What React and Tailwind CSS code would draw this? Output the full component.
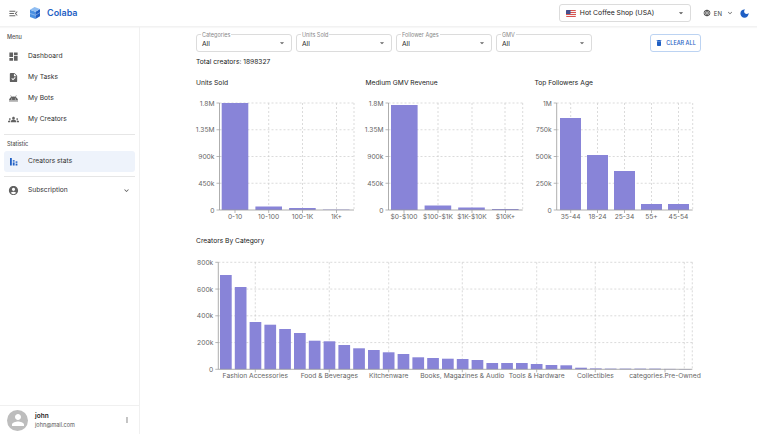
import React from "react";
import { MdMenuOpen, MdDashboard, MdTask, MdGroups, MdAccountCircle, MdExpandMore, MdLanguage, MdDarkMode, MdDelete, MdMoreVert, MdArrowDropDown, MdPerson } from "react-icons/md";

const F = '"Inter","Liberation Sans",sans-serif';
const fmt = { fontFamily: F };

function Chart({ box, left, right, top, bottom, yLabels, vgrid, bars, xLabels, barW }) {
  const [x0, y0, w, h] = box;
  const n = yLabels.length;
  const ys = yLabels.map((_, i) => top + ((bottom - top) * i) / (n - 1));
  return (
    <svg width={w} height={h} viewBox={`${x0} ${y0} ${w} ${h}`} className="block overflow-visible">
      {ys.slice(0, -1).map((y) => (
        <line key={y} x1={left} x2={right} y1={y} y2={y} stroke="#ccc" strokeWidth="0.7" strokeDasharray="2 2" />
      ))}
      {vgrid.concat(right).map((x) => (
        <line key={x} x1={x} x2={x} y1={top} y2={bottom} stroke="#ccc" strokeWidth="0.7" strokeDasharray="2 2" />
      ))}
      {bars.map(([x, t], i) => (
        <rect key={i} x={x} y={t} width={barW} height={bottom - t} fill="#8884d8" />
      ))}
      <line x1={left} x2={left} y1={top} y2={bottom} stroke="#999" strokeWidth="0.8" />
      <line x1={left} x2={right} y1={bottom} y2={bottom} stroke="#999" strokeWidth="0.8" />
      {ys.map((y, i) => (
        <g key={i}>
          <line x1={left - 3} x2={left} y1={y} y2={y} stroke="#999" strokeWidth="0.7" />
          <text x={left - 5} y={y + 2.5} textAnchor="end" fontSize="6.7" fill="#666" style={fmt}>{yLabels[i]}</text>
        </g>
      ))}
      {xLabels.map(([x, s]) => (
        <g key={s}>
          <line x1={x} x2={x} y1={bottom} y2={bottom + 3} stroke="#999" strokeWidth="0.7" />
          <text x={x} y={bottom + 9} textAnchor="middle" fontSize="6.7" fill="#666" style={fmt}>{s}</text>
        </g>
      ))}
    </svg>
  );
}

const catTops = [275,287,322,324.7,329,333,340.7,341.3,345,348.3,350,352.3,354,357.3,358,358.7,359,360,363,363,363,364,365,365.3,367.7,368.4,368.6,368.6,368.6,368.6,368.9,369];

function NavItem({ icon, label, active }) {
  return (
    <div className={`flex h-[21px] items-center rounded-[3px] ${active ? "bg-[#eef3fb]" : ""}`}>
      <span className={`flex w-[18px] justify-center text-[11px] ${active ? "text-[#1f5fc4]" : "text-[#616161]"}`}>{icon}</span>
      <span className="ml-[6px] text-[6.7px] text-[#333]">{label}</span>
    </div>
  );
}

function Filter({ label }) {
  return (
    <div className="relative flex h-[18px] w-[96px] items-center justify-between rounded-[3px] border border-[#dcdcdc] pl-[5px] pr-[4px]">
      <span className="absolute left-[4px] top-[-3px] bg-white px-[1px] text-[5.5px] leading-[6px] text-[#888]">{label}</span>
      <span className="pt-[2px] text-[6.7px] text-[#222]">All</span>
      <MdArrowDropDown className="text-[10px] text-[#666]" />
    </div>
  );
}

function Logo() {
  return (
    <svg width="10" height="12" viewBox="0 0 11 13">
      <path d="M0 3 L6 5 L6 13 L0 11Z" fill="#4a90e2" />
      <path d="M6 5 L11 2 L11 10 L6 13Z" fill="#1f5fc4" />
      <path d="M0 3 L5 0 L11 2 L6 5Z" fill="#8fbdf2" />
      <path d="M0 7 L6 9 L11 6" stroke="#cfe2fa" strokeWidth="0.5" fill="none" />
    </svg>
  );
}

function Flag() {
  return (
    <svg width="10" height="7" viewBox="0 0 10 7" className="rounded-[1px]">
      <rect width="10" height="7" fill="#d9534f" />
      <rect y="1" width="10" height="1" fill="#f3f3f3" />
      <rect y="3" width="10" height="1" fill="#f3f3f3" />
      <rect y="5" width="10" height="1" fill="#f3f3f3" />
      <rect width="4.5" height="4" fill="#44508f" />
    </svg>
  );
}

function BotIcon() {
  return (
    <svg width="11" height="11" viewBox="0 0 11 11" fill="currentColor">
      <path d="M1 7.5 a4.5 4 0 0 1 9 0 z" />
      <path d="M2.6 2.4 L3.8 4.2 M8.4 2.4 L7.2 4.2" stroke="currentColor" strokeWidth="0.6" />
      <circle cx="3.7" cy="6" r="0.5" fill="#fff" />
      <circle cx="7.3" cy="6" r="0.5" fill="#fff" />
      <rect x="1" y="8" width="9" height="0.8" opacity="0.5" />
    </svg>
  );
}

function StatsIcon() {
  return (
    <svg width="11" height="11" viewBox="0 0 11 11" fill="currentColor">
      <rect x="2" y="2" width="1.8" height="7.5" />
      <rect x="4.8" y="4.2" width="1.8" height="1.4" />
      <rect x="4.8" y="6.4" width="1.8" height="3.1" />
      <rect x="7.6" y="5.4" width="1.8" height="1.4" />
      <rect x="7.6" y="7.6" width="1.8" height="1.9" />
    </svg>
  );
}

export default function App() {
  return (
    <div className="flex h-[434px] w-[757px] flex-col overflow-hidden bg-white" style={fmt}>
      <header className="flex h-[27px] shrink-0 items-center border-b border-[#f2f2f2] pl-[8px] pr-[7px] shadow-[0_1px_1px_rgba(0,0,0,0.03)]">
        <MdMenuOpen className="text-[11px] text-[#666]" />
        <span className="ml-[11px]"><Logo /></span>
        <span className="ml-[7px] text-[9px] font-semibold text-[#1f5fc4]">Colaba</span>
        <div className="ml-auto flex h-[18px] w-[132px] items-center rounded-[3px] border border-[#dcdcdc] pl-[6px] pr-[4px]">
          <Flag />
          <span className="ml-[4px] text-[6.8px] text-[#222]">Hot Coffee Shop (USA)</span>
          <MdArrowDropDown className="ml-auto text-[10px] text-[#555]" />
        </div>
        <MdLanguage className="ml-[12px] text-[8px] text-[#333]" />
        <span className="ml-[3px] text-[6px] text-[#444]">EN</span>
        <MdExpandMore className="ml-[4px] text-[8px] text-[#555]" />
        <MdDarkMode className="ml-[5px] text-[11px] text-[#1f5fc4]" />
      </header>
      <div className="flex min-h-0 flex-1">
        <aside className="flex w-[140px] shrink-0 flex-col border-r border-[#f0f0f0]">
          <div className="flex-1 px-[4px]">
            <div className="px-[3px] pt-[7px] text-[5.5px] font-medium leading-[7px] text-[#555]">Menu</div>
            <div className="mt-[5px] flex flex-col">
              <NavItem icon={<MdDashboard />} label="Dashboard" />
              <NavItem icon={<MdTask />} label="My Tasks" />
              <NavItem icon={<BotIcon />} label="My Bots" />
              <NavItem icon={<MdGroups />} label="My Creators" />
            </div>
            <div className="mt-[4px] h-px bg-[#e6e6e6]" />
            <div className="px-[3px] pt-[6px] text-[5.5px] font-medium leading-[7px] text-[#555]">Statistic</div>
            <div className="mt-[3px]">
              <NavItem active icon={<StatsIcon />} label="Creators stats" />
            </div>
            <div className="mt-[4px] h-px bg-[#e6e6e6]" />
            <div className="mt-[3px] flex items-center pr-[4px]">
              <div className="flex-1"><NavItem icon={<MdAccountCircle />} label="Subscription" /></div>
              <MdExpandMore className="text-[9px] text-[#555]" />
            </div>
          </div>
          <div className="flex h-[29px] items-center border-t border-[#f0f0f0] pl-[7px] pr-[8px]">
            <div className="flex h-[21px] w-[21px] items-center justify-center overflow-hidden rounded-full bg-[#bdbdbd]">
              <MdPerson className="text-[18px] text-white" />
            </div>
            <div className="ml-[7px] flex flex-col">
              <span className="text-[6.5px] font-semibold leading-[9px] text-[#222]">john</span>
              <span className="text-[5.5px] leading-[8px] text-[#555]">john@mail.com</span>
            </div>
            <MdMoreVert className="ml-auto text-[8px] text-[#555]" />
          </div>
        </aside>
        <main className="min-w-0 flex-1 pl-[56px] pr-[56px] pt-[7px]">
          <div className="flex items-center gap-[4px]">
            <Filter label="Categories" />
            <Filter label="Units Sold" />
            <Filter label="Follower Ages" />
            <Filter label="GMV" />
            <button className="ml-auto flex h-[18px] w-[51px] items-center justify-center gap-[3px] rounded-[3px] border border-[#bcd3f2] text-[5.5px] font-medium text-[#1f5fc4]">
              <MdDelete className="text-[8px]" />
              CLEAR ALL
            </button>
          </div>
          <div className="mt-[5px] text-[6.7px] leading-[10px] text-[#222]">Total creators: 1898327</div>
          <div className="mt-[11px] flex">
            <div className="w-[169.5px]">
              <div className="text-[6.7px] leading-[10px] text-[#222]">Units Sold</div>
              <div className="mt-[7px]">
                <Chart box={[196,95,170,130]} left={219.5} right={354} top={103} bottom={210} barW={26.6}
                  yLabels={["1.8M","1.35M","900k","450k","0"]}
                  vgrid={[268.7,302.5,336.5]}
                  bars={[[221.7,103],[255.4,206.5],[289.1,208],[322.9,209.6]]}
                  xLabels={[[235,"0-10"],[268.7,"10-100"],[302.5,"100-1K"],[336.5,"1K+"]]} />
              </div>
            </div>
            <div className="w-[169px]">
              <div className="text-[6.7px] leading-[10px] text-[#222]">Medium GMV Revenue</div>
              <div className="mt-[7px]">
                <Chart box={[366,95,169,130]} left={388.5} right={522.7} top={103} bottom={210} barW={26.6}
                  yLabels={["1.8M","1.35M","900k","450k","0"]}
                  vgrid={[438,472,505]}
                  bars={[[391,105],[424.6,205.5],[458.2,207.5],[492,209]]}
                  xLabels={[[404,"$0-$100"],[438,"$100-$1K"],[472,"$1K-$10K"],[505.5,"$10K+"]]} />
              </div>
            </div>
            <div className="w-[170px]">
              <div className="text-[6.7px] leading-[10px] text-[#222]">Top Followers Age</div>
              <div className="mt-[7px]">
                <Chart box={[535,95,170,130]} left={556.7} right={692.7} top={103} bottom={210} barW={21}
                  yLabels={["1M","750k","500k","250k","0"]}
                  vgrid={[570.7,597.5,624.5,651.5,678.5]}
                  bars={[[560,118],[587,155],[614,171],[641,204],[668,204]]}
                  xLabels={[[570.7,"35-44"],[597.5,"18-24"],[624.5,"25-34"],[651.5,"55+"],[678.5,"45-54"]]} />
              </div>
            </div>
          </div>
          <div className="mt-[11px] text-[6.7px] leading-[10px] text-[#222]">Creators By Category</div>
          <div className="mt-[10px]">
            <Chart box={[196,256,509,130]} left={218.3} right={692.3} top={262.3} bottom={369.3} barW={11.7}
              yLabels={["800k","600k","400k","200k","0"]}
              vgrid={[255.3,329.3,388.7,462.3,536.7,595.3,684.3]}
              bars={catTops.map((t, i) => [220 + i * 14.8, t])}
              xLabels={[[255.3,"Fashion Accessories"],[329.3,"Food & Beverages"],[388.7,"Kitchenware"],[462.3,"Books, Magazines & Audio"],[536.7,"Tools & Hardware"],[595.3,"Collectibles"],[665,"categories.Pre-Owned"]]} />
          </div>
        </main>
      </div>
    </div>
  );
}
